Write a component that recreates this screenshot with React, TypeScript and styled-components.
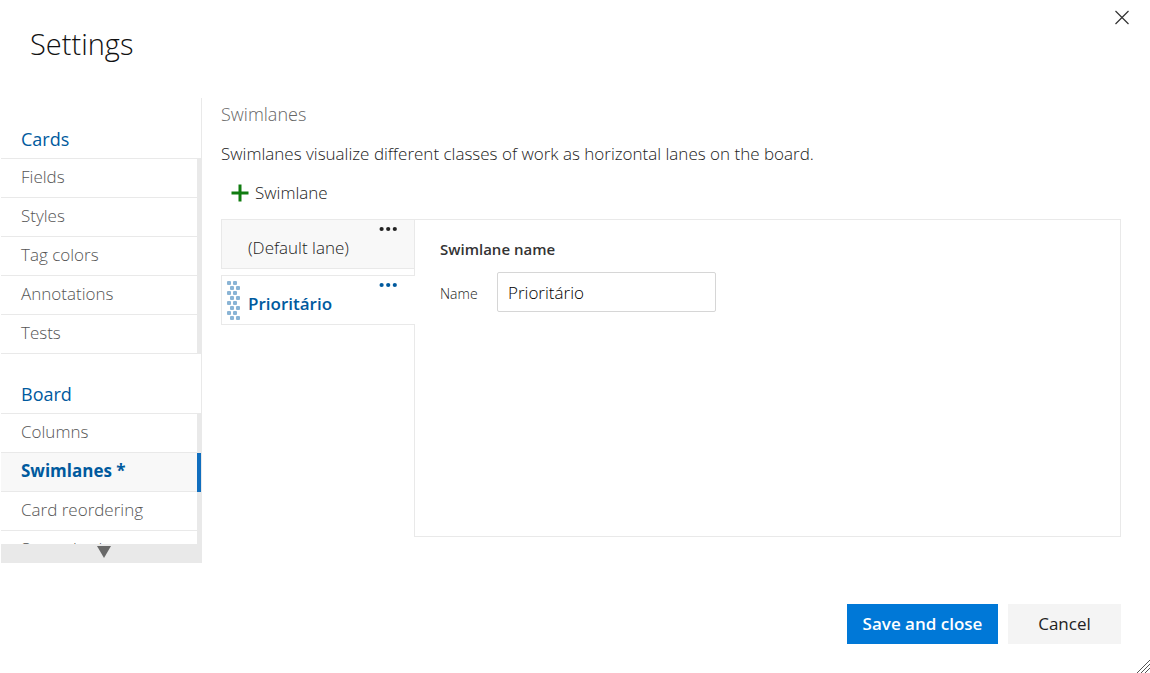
import React, { useState } from "react";
import styled, { createGlobalStyle } from "styled-components";

const line = "#e9e9e9";
const link = "#005a9e";

const GlobalStyle = createGlobalStyle`
  *, *::before, *::after { box-sizing: border-box; }
  body {
    margin: 0;
    background: #fff;
    color: #222;
    font-family: "Open Sans", "Noto Sans", sans-serif;
    font-size: 17px;
    line-height: 24px;
    font-weight: 300;
  }
  h1, h2, h3, p, ul { margin: 0; padding: 0; }
  ul { list-style: none; }
  a { text-decoration: none; }
  button, input { font: inherit; color: inherit; }
  button { border: 0; padding: 0; background: none; cursor: pointer; }
  svg { display: block; }
`;

const Dialog = styled.div`
  display: flex;
  flex-direction: column;
  height: 100vh;
  min-height: 480px;
`;

const Header = styled.header`
  display: flex;
  justify-content: space-between;
  align-items: flex-start;
  height: 98px;
  padding: 0 20px 0 30px;
`;

const Title = styled.h1`
  padding-top: 24px;
  font-size: 29px;
  line-height: 40px;
  font-weight: 300;
  color: #111;
`;

const CloseButton = styled.button`
  padding: 10px 0;
`;

const Body = styled.div`
  display: flex;
  flex: 1;
  min-height: 0;
`;

const Nav = styled.nav`
  display: flex;
  flex-direction: column;
  flex: none;
  width: 202px;
  padding-left: 1px;
`;

const NavScroll = styled.div`
  flex: 1;
  min-height: 0;
  padding-top: 1px;
  overflow: hidden;
  border-right: 1px solid ${line};
`;

const NavHeading = styled.h2`
  display: flex;
  align-items: flex-end;
  height: 60px;
  padding: 0 20px 6px;
  border-bottom: 1px solid ${line};
  font-size: 18px;
  line-height: 26px;
  font-weight: 400;
  color: ${link};
`;

const NavItem = styled.li<{ $selected?: boolean }>`
  height: 39px;
  border-right: 4px solid ${(p) => (p.$selected ? "#106ebe" : line)};
  background: ${(p) => (p.$selected ? "#f8f8f8" : "#fff")};
`;

const NavLink = styled.a<{ $selected?: boolean }>`
  display: block;
  height: 39px;
  padding: 0 20px;
  border-bottom: 1px solid ${line};
  line-height: 36px;
  font-weight: ${(p) => (p.$selected ? 700 : 300)};
  color: ${(p) => (p.$selected ? link : "#555")};
`;

const ScrollDown = styled.button`
  display: flex;
  align-items: center;
  justify-content: center;
  flex: none;
  height: 19px;
  padding: 0 0 3px 4px;
  background: ${line};
`;

const Content = styled.main`
  display: flex;
  flex-direction: column;
  flex: 1;
  min-width: 0;
  padding: 4px 29px 26px 19px;
`;

const SectionTitle = styled.h2`
  font-size: 18px;
  line-height: 24px;
  font-weight: 300;
  color: #666;
`;

const Description = styled.p`
  margin-top: 16px;
`;

const AddButton = styled.button`
  display: flex;
  align-items: center;
  align-self: flex-start;
  gap: 6px;
  margin: 15px 0 14px;
  padding-left: 10px;
`;

const Editor = styled.section`
  display: flex;
  flex: 1;
  min-height: 0;
`;

const Lanes = styled.ul`
  display: flex;
  flex-direction: column;
  flex: none;
  gap: 6px;
  width: 193px;
`;

const Lane = styled.li<{ $selected?: boolean }>`
  display: flex;
  height: 50px;
  margin-right: ${(p) => (p.$selected ? "-1px" : "0")};
  padding-right: ${(p) => (p.$selected ? "18px" : "17px")};
  border: 1px solid ${line};
  border-right: 0;
  background: ${(p) => (p.$selected ? "#fff" : "#f8f8f8")};
  color: ${(p) => (p.$selected ? link : "#222")};
  z-index: 1;
`;

const Grip = styled.span`
  width: 25px;
  padding: 5px 0 0 5px;
`;

const LaneName = styled.button<{ $selected?: boolean }>`
  flex: 1;
  padding: 7px 0 0 1px;
  text-align: left;
  white-space: nowrap;
  font-weight: ${(p) => (p.$selected ? 600 : 300)};
`;

const MoreButton = styled.button`
  align-self: flex-start;
  padding: 6px 0;
`;

const Panel = styled.div`
  flex: 1;
  min-width: 0;
  padding: 17px 25px;
  border: 1px solid ${line};
`;

const PanelTitle = styled.h3`
  font-size: 15px;
  line-height: 24px;
  font-weight: 600;
  color: #333;
`;

const Field = styled.div`
  display: flex;
  align-items: center;
  margin-top: 11px;
`;

const FieldLabel = styled.label`
  width: 57px;
  padding-top: 3px;
  font-size: 14px;
`;

const TextInput = styled.input`
  width: 219px;
  height: 40px;
  padding: 0 10px;
  border: 1px solid #d6d6d6;
  border-radius: 2px;
  background: #fff;
  color: #000;
  outline: 0;
`;

const Footer = styled.footer`
  display: flex;
  justify-content: flex-end;
  align-items: flex-start;
  gap: 10px;
  height: 110px;
  padding: 41px 29px 0;
`;

const ActionButton = styled.button<{ $primary?: boolean }>`
  width: ${(p) => (p.$primary ? "151px" : "113px")};
  height: 40px;
  background: ${(p) => (p.$primary ? "#0078d7" : "#f4f4f4")};
  color: ${(p) => (p.$primary ? "#fff" : "#222")};
  font-weight: ${(p) => (p.$primary ? 600 : 400)};
`;

const ResizeHandle = styled.span`
  position: fixed;
  right: 0;
  bottom: 0;
`;

const groups = [
  { title: "Cards", items: ["Fields", "Styles", "Tag colors", "Annotations", "Tests"] },
  { title: "Board", items: ["Columns", "Swimlanes *", "Card reordering", "Status badge"] },
];

const gripRows = [0, 1, 2, 3, 4, 5, 6, 7];

const GripIcon = () => (
  <svg width="13" height="39" fill="#8ab4d5" aria-hidden="true">
    {gripRows.map((r) => (
      <g key={r}>
        <rect x={r % 2 ? 3 : 0} y={r * 5} width="4" height="4" rx="1" />
        <rect x={r % 2 ? 9 : 6} y={r * 5} width="4" height="4" rx="1" />
      </g>
    ))}
  </svg>
);

const MoreIcon = () => (
  <svg width="18" height="6" fill="currentColor" aria-hidden="true">
    <circle cx="2.6" cy="3" r="2.1" />
    <circle cx="9.2" cy="3" r="2.1" />
    <circle cx="15.8" cy="3" r="2.1" />
  </svg>
);

export default function App() {
  const [name, setName] = useState("Prioritário");
  return (
    <>
      <GlobalStyle />
      <Dialog role="dialog" aria-labelledby="settings-title">
        <Header>
          <Title id="settings-title">Settings</Title>
          <CloseButton aria-label="Close">
            <svg width="16" height="16" stroke="#333" strokeWidth="1.2" aria-hidden="true">
              <path d="M1.5 1L14.5 14M14.5 1L1.5 14" />
            </svg>
          </CloseButton>
        </Header>
        <Body>
          <Nav aria-label="Settings sections">
            <NavScroll>
              {groups.map((g) => (
                <section key={g.title}>
                  <NavHeading>{g.title}</NavHeading>
                  <ul>
                    {g.items.map((item) => {
                      const selected = item.startsWith("Swimlanes");
                      return (
                        <NavItem key={item} $selected={selected}>
                          <NavLink href="#" $selected={selected}>
                            {item}
                          </NavLink>
                        </NavItem>
                      );
                    })}
                  </ul>
                </section>
              ))}
            </NavScroll>
            <ScrollDown aria-label="Scroll down">
              <svg width="14" height="12" fill="#696969" aria-hidden="true">
                <path d="M0 0H14L7 12Z" />
              </svg>
            </ScrollDown>
          </Nav>
          <Content>
            <SectionTitle>Swimlanes</SectionTitle>
            <Description>
              Swimlanes visualize different classes of work as horizontal lanes on the board.
            </Description>
            <AddButton>
              <svg width="18" height="18" fill="#107c10" aria-hidden="true">
                <path d="M7.5 0.5h3v7h7v3h-7v7h-3v-7h-7v-3h7z" />
              </svg>
              Swimlane
            </AddButton>
            <Editor>
              <Lanes>
                <Lane>
                  <Grip />
                  <LaneName>(Default lane)</LaneName>
                  <MoreButton aria-label="Default lane options">
                    <MoreIcon />
                  </MoreButton>
                </Lane>
                <Lane $selected>
                  <Grip>
                    <GripIcon />
                  </Grip>
                  <LaneName $selected>Prioritário</LaneName>
                  <MoreButton aria-label="Prioritário options">
                    <MoreIcon />
                  </MoreButton>
                </Lane>
              </Lanes>
              <Panel>
                <PanelTitle>Swimlane name</PanelTitle>
                <Field>
                  <FieldLabel htmlFor="lane-name">Name</FieldLabel>
                  <TextInput
                    id="lane-name"
                    type="text"
                    value={name}
                    onChange={(e) => setName(e.target.value)}
                  />
                </Field>
              </Panel>
            </Editor>
          </Content>
        </Body>
        <Footer>
          <ActionButton $primary>Save and close</ActionButton>
          <ActionButton>Cancel</ActionButton>
        </Footer>
        <ResizeHandle>
          <svg width="14" height="13" stroke="#555" strokeWidth="1" aria-hidden="true">
            <path d="M1 13L14 0M5 13L14 4M9 13L14 8" />
          </svg>
        </ResizeHandle>
      </Dialog>
    </>
  );
}
